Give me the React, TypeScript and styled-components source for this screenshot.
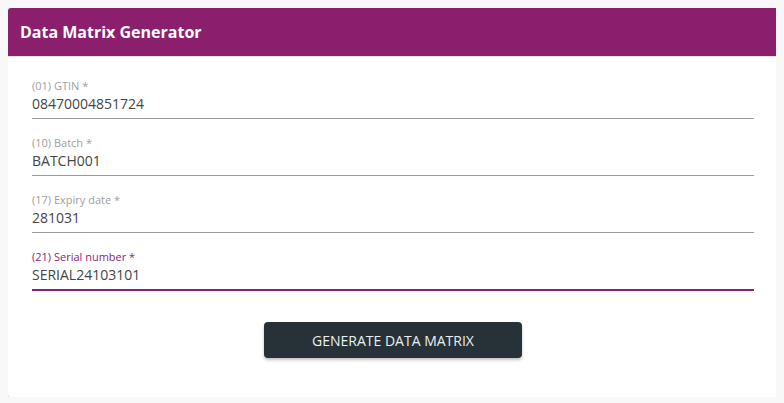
import styled, { createGlobalStyle } from 'styled-components'

const GlobalStyle = createGlobalStyle`
  body {
    margin: 8px;
    background: #f8f8f8;
    font-family: "Open Sans", "Liberation Sans", sans-serif;
  }
`

const fields = [
  { label: '(01) GTIN *', value: '08470004851724' },
  { label: '(10) Batch *', value: 'BATCH001' },
  { label: '(17) Expiry date *', value: '281031' },
  { label: '(21) Serial number *', value: 'SERIAL24103101', focused: true },
]

const App = () => {
  return (
    <>
      <GlobalStyle />
      <Card>
        <Header>Data Matrix Generator</Header>
        <Body>
          {fields.map((f) => (
            <Field key={f.label} $focused={!!f.focused}>
              <Label $focused={!!f.focused}>{f.label}</Label>
              <Input defaultValue={f.value} />
            </Field>
          ))}
          <Actions>
            <Button>GENERATE DATA MATRIX</Button>
          </Actions>
        </Body>
      </Card>
    </>
  )
}

const Card = styled.div`
  width: 770px;
  background: #fff;
  border-radius: 3px;
  box-shadow: 0 1px 3px rgba(0, 0, 0, 0.22);
  overflow: hidden;
`

const Header = styled.div`
  height: 48px;
  display: flex;
  align-items: center;
  padding: 0 12px;
  background: #8b1f6e;
  color: #fff;
  font-size: 16px;
  font-weight: 700;
  border-bottom: 1px solid #e2e2e2;
`

const Body = styled.div`
  display: flex;
  flex-direction: column;
  gap: 17px;
  padding: 22px 24px 39px;
`

const Field = styled.div<{ $focused: boolean }>`
  display: flex;
  flex-direction: column;
  border-bottom: 1px solid ${(p) => (p.$focused ? '#8b1f6e' : '#9a9a9a')};
  box-shadow: ${(p) => (p.$focused ? '0 1px 0 #8b1f6e' : 'none')};
`

const Label = styled.label<{ $focused: boolean }>`
  font-size: 11px;
  font-weight: 400;
  line-height: 14px;
  color: ${(p) => (p.$focused ? '#8b1f6e' : '#9e9e9e')};
`

const Input = styled.input`
  box-sizing: border-box;
  height: 25px;
  padding: 0 0 4px;
  border: none;
  outline: none;
  background: transparent;
  font-family: "Open Sans", "Liberation Sans", sans-serif;
  font-size: 14px;
  font-weight: 400;
  color: #444;
`

const Actions = styled.div`
  display: flex;
  justify-content: center;
  padding-top: 15px;
`

const Button = styled.button`
  width: 258px;
  height: 36px;
  border: none;
  border-radius: 4px;
  background: #263238;
  color: #eceff1;
  font-family: "Open Sans", "Liberation Sans", sans-serif;
  font-size: 14px;
  font-weight: 500;
  box-shadow: 0 2px 3px rgba(0, 0, 0, 0.25);
  cursor: pointer;
`

export default App
